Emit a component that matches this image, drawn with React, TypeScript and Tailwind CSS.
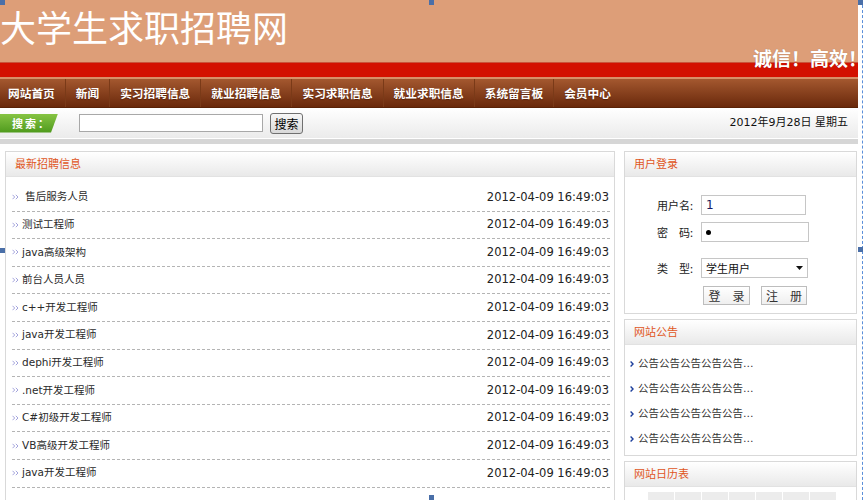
import React from 'react';

const NAV = ['网站首页', '新闻', '实习招聘信息', '就业招聘信息', '实习求职信息', '就业求职信息', '系统留言板', '会员中心'];

const JOBS = [
  ' 售后服务人员',
  '测试工程师',
  'java高级架构',
  '前台人员人员',
  'c++开发工程师',
  'java开发工程师',
  'dephi开发工程师',
  '.net开发工程师',
  'C#初级开发工程师',
  'VB高级开发工程师',
  'java开发工程师',
];

const cjk = "font-['DejaVu_Sans','Noto_Sans_CJK_SC',sans-serif]";

const BoxHead: React.FC<{ title: string }> = ({ title }) => (
  <div className="h-[25px] bg-gradient-to-b from-white to-[#e9e9e9] border-b border-[#e2e2e2] pl-[9px] text-[11px] leading-[25px] text-[#e0561d]">
    {title}
  </div>
);

const DoubleArrow = () => (
  <svg width="7" height="6" viewBox="0 0 7 6" className="shrink-0">
    <path d="M0.5 0.8 L2.7 3 L0.5 5.2 M3.8 0.8 L6 3 L3.8 5.2" stroke="#a4a4dc" strokeWidth="1" fill="none" />
  </svg>
);

const Handle: React.FC<{ className: string }> = ({ className }) => (
  <div className={`absolute w-[5px] h-[5px] bg-[#4a6fa8] ${className}`} />
);

export default function App() {
  return (
    <div className={`relative w-[866px] h-[500px] overflow-hidden bg-white ${cjk}`}>
      <div className="w-[858px]">
        {/* Header */}
        <div className="relative">
          <div className="h-[62px] bg-[#dd9e78] text-white text-[36px] leading-[40px] pt-[6px] font-['Noto_Sans_CJK_SC',sans-serif]">
            大学生求职招聘网
          </div>
          <div className="h-[15px] bg-[#d31100] border-t border-[#c9543a]" />
          <div className="absolute right-[-9px] top-[45px] text-white text-[19px] font-bold leading-[26px] font-['Noto_Sans_CJK_SC',sans-serif] [text-shadow:0_0_1px_rgba(0,0,0,0.3)]">
            诚信！高效！
          </div>
        </div>

        {/* Nav */}
        <div className="h-[2px] bg-[#d89068]" />
        <div className="h-[29px] bg-gradient-to-b from-[#a4582f] to-[#6a290b] border-b border-[#5a2206] flex items-center pl-[8px]">
          {NAV.map((n, i) => (
            <div
              key={n}
              className={`h-[28px] flex items-center text-white text-[11.7px] font-bold font-['Noto_Sans_CJK_SC',sans-serif] [text-shadow:0_1px_1px_rgba(60,20,0,0.6)] ${i === 0 ? 'pr-[10px]' : 'px-[10px]'} ${i < NAV.length - 1 ? 'border-r border-[#7a3a18]' : ''}`}
            >
              {n}
            </div>
          ))}
        </div>

        {/* Search bar */}
        <div className="h-[31px] bg-gradient-to-b from-white to-[#ebebeb] border-b border-white flex items-center">
          <div className="h-[19px] w-[58px] bg-gradient-to-b from-[#86c443] to-[#4e9a1c] [clip-path:polygon(0_0,100%_0,88%_100%,0_100%)] text-white text-[11px] font-bold leading-[19px] pl-[12px] tracking-[2px] font-['Noto_Sans_CJK_SC',sans-serif]">
            搜索：
          </div>
          <div className="ml-[21px] w-[184px] h-[18px] border border-[#a8a8a8] bg-white" />
          <div className="ml-[7px] w-[33px] h-[21px] border border-[#707070] rounded-[3px] bg-gradient-to-b from-[#f7f7f7] to-[#d9d9d9] text-[12px] leading-[19px] text-center text-black font-['Noto_Sans_CJK_SC',sans-serif]">
            搜索
          </div>
          <div className="ml-auto pr-[10px] text-[11px] text-[#111]">2012年9月28日 星期五</div>
        </div>
        <div className="h-[5px] bg-[#d6d6d6]" />

        {/* Content */}
        <div className="flex gap-[9px] pl-[5px] pt-[7px]">
          {/* Left list */}
          <div className="w-[610px] h-[400px] border border-[#d9d9d9] bg-white">
            <BoxHead title="最新招聘信息" />
            <div className="pt-[7px] pl-[6px] pr-[4px]">
              {JOBS.map((j, i) => (
                <div key={i} className="h-[27.6px] flex items-center border-b border-dashed border-[#b4b4b4]">
                  <DoubleArrow />
                  <span className="ml-[3px] text-[10.5px] text-[#2a2a2a] whitespace-pre">{j}</span>
                  <span className="ml-auto pr-[1px] text-[11.5px] text-[#222] font-['DejaVu_Sans',sans-serif]">2012-04-09 16:49:03</span>
                </div>
              ))}
            </div>
          </div>

          {/* Right column */}
          <div className="w-[233px] flex flex-col">
            <div className="h-[163px] border border-[#d9d9d9] bg-white">
              <BoxHead title="用户登录" />
              <div className="pl-[32px] pt-[18px] text-[11px] text-[#222] font-['Noto_Sans_CJK_SC',sans-serif]">
                <div className="flex items-center h-[20px]">
                  <span className="w-[44px]">用户名:</span>
                  <div className="w-[105px] h-[20px] border border-[#c6c6c6] bg-white pl-[4px] text-[12px] leading-[18px] text-[#1a1a60] font-['DejaVu_Sans',sans-serif]">1</div>
                </div>
                <div className="flex items-center h-[20px] mt-[7px]">
                  <span className="w-[44px]">密　码:</span>
                  <div className="w-[108px] h-[20px] border border-[#c6c6c6] bg-white pl-[4px] flex items-center">
                    <div className="w-[5px] h-[5px] rounded-full bg-black" />
                  </div>
                </div>
                <div className="flex items-center h-[20px] mt-[16px]">
                  <span className="w-[44px]">类　型:</span>
                  <div className="w-[107px] h-[20px] border border-[#c6c6c6] bg-white pl-[4px] flex items-center text-[11px] text-[#111]">
                    学生用户
                    <svg width="7" height="4" viewBox="0 0 7 4" className="ml-auto mr-[4px]">
                      <path d="M0 0 L7 0 L3.5 4 Z" fill="#111" />
                    </svg>
                  </div>
                </div>
                <div className="flex items-center mt-[8px] pl-[46px] gap-[11px]">
                  <div className="w-[47px] h-[19px] border border-[#bdbdbd] bg-gradient-to-b from-white to-[#efefef] text-center text-[12px] leading-[17px] text-[#333]">登　录</div>
                  <div className="w-[46px] h-[19px] border border-[#bdbdbd] bg-gradient-to-b from-white to-[#efefef] text-center text-[12px] leading-[17px] text-[#333]">注　册</div>
                </div>
              </div>
            </div>

            <div className="mt-[5px] h-[137px] border border-[#d9d9d9] bg-white">
              <BoxHead title="网站公告" />
              <div className="pt-[6px] pl-[5px]">
                {[0, 1, 2, 3].map((k) => (
                  <div key={k} className="h-[25px] flex items-center">
                    <svg width="4" height="6" viewBox="0 0 4 6" className="shrink-0">
                      <path d="M0.6 0.6 L3 3 L0.6 5.4" stroke="#1d3f9c" strokeWidth="1.4" fill="none" />
                    </svg>
                    <span className="ml-[4px] text-[10.5px] text-[#333]">公告公告公告公告公告…</span>
                  </div>
                ))}
              </div>
            </div>

            <div className="mt-[5px] h-[80px] border border-[#d9d9d9] bg-white">
              <BoxHead title="网站日历表" />
              <div className="flex gap-[1px] pl-[23px] pt-[5px]">
                {[0, 1, 2, 3, 4, 5, 6].map((k) => (
                  <div key={k} className="w-[26px] h-[20px] bg-[#ececec]" />
                ))}
              </div>
            </div>
          </div>
        </div>
      </div>

      {/* design-view selection frame */}
      <div className="absolute top-0 bottom-0 left-[862px] border-l border-dashed border-[#5b8fd9]" />
      <Handle className="left-0 top-0" />
      <Handle className="left-[429px] top-0" />
      <Handle className="left-[858px] top-0" />
      <Handle className="left-0 top-[248px]" />
      <Handle className="left-[858px] top-[247px]" />
      <Handle className="left-[429px] top-[495px]" />
    </div>
  );
}
